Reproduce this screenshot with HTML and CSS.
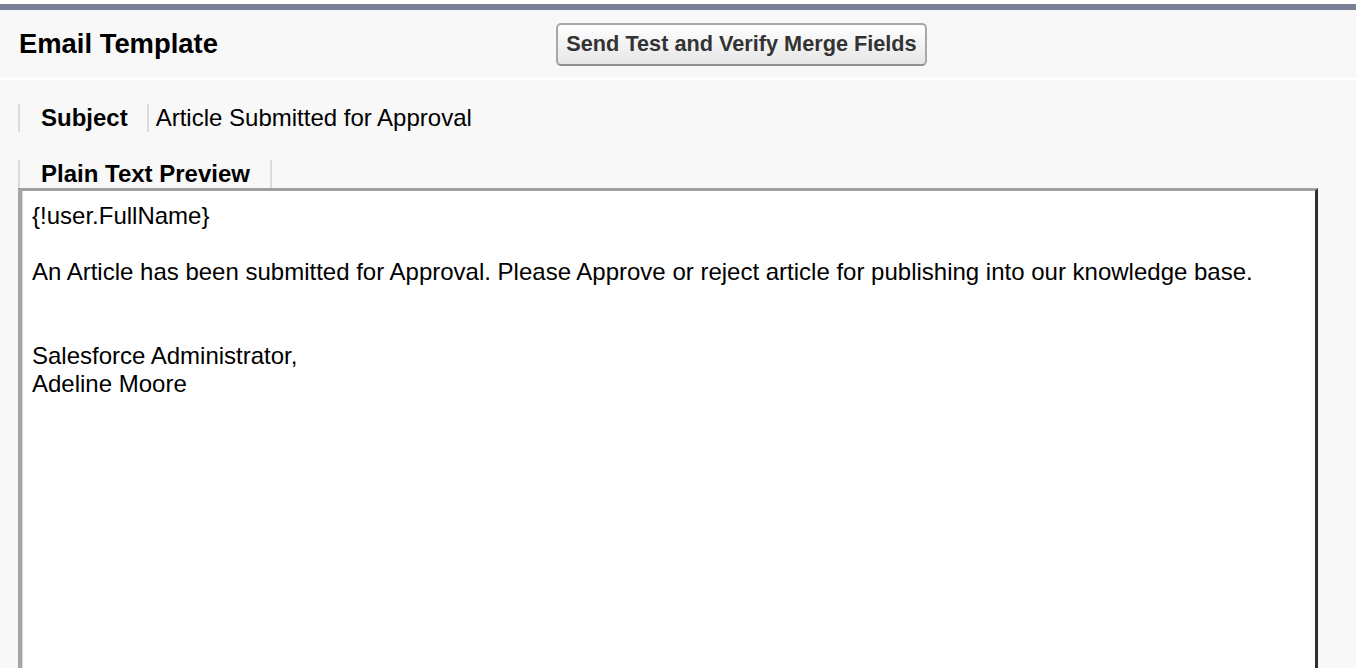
FILE: index.html
```html
<!DOCTYPE html>
<html lang="en">
<head>
<meta charset="utf-8">
<title>Email Template</title>
<link rel="stylesheet" href="styles.css">
</head>
<body>
<div class="page">
  <div class="accent"></div>
  <header class="header">
    <h1 class="title">Email Template</h1>
    <button class="btn" type="button">Send Test and Verify Merge Fields</button>
  </header>
  <main class="content">
    <div class="subject-row">
      <span class="subject-label">Subject</span>
      <span class="subject-value">Article Submitted for Approval</span>
    </div>
    <div class="tab-row">
      <span class="tab-label">Plain Text Preview</span>
    </div>
    <div class="preview">{!user.FullName}

An Article has been submitted for Approval. Please Approve or reject article for publishing into our knowledge base.


Salesforce Administrator,
Adeline Moore</div>
  </main>
</div>
</body>
</html>
```
FILE: styles.css
```css
html, body {
  margin: 0;
  padding: 0;
  background: #f8f8f8;
  font-family: "Liberation Sans", Arial, Helvetica, sans-serif;
  color: #000;
  overflow: hidden;
}

.page {
  border-top: 4px solid #ffffff;
}

.accent {
  height: 6px;
  background: #787f96;
}

.header {
  display: flex;
  align-items: center;
  height: 70px;
  padding-left: 19px;
  border-bottom: 2px solid #ffffff;
  box-sizing: border-box;
}

.title {
  margin: 0;
  font-size: 27.4px;
  font-weight: bold;
  line-height: 32px;
  width: 201px;
  white-space: nowrap;
}

.btn {
  margin-left: 336px;
  width: 371px;
  height: 43px;
  padding: 0;
  font-family: "Liberation Sans", Arial, Helvetica, sans-serif;
  font-size: 21.7px;
  font-weight: bold;
  color: #333333;
  background: linear-gradient(#ffffff, #f1f1f1 55%, #e6e6e6);
  border: 2px solid #a8a8a8;
  border-bottom-color: #8f8f8f;
  border-radius: 5px;
  white-space: nowrap;
}

.content {
  padding-top: 24px;
}

.subject-row {
  display: flex;
  align-items: center;
  height: 28px;
  margin-left: 18px;
  font-size: 24px;
  line-height: 28px;
  border-left: 2px solid #dcdcdc;
}

.subject-label {
  font-weight: bold;
  padding: 0 19px 0 21px;
  border-right: 2px solid #dcdcdc;
}

.subject-value {
  padding-left: 7px;
}

.tab-row {
  display: flex;
  margin-top: 28px;
  margin-left: 18px;
  height: 28px;
}

.tab-label {
  font-size: 24px;
  font-weight: bold;
  line-height: 28px;
  padding: 0 20px 0 21px;
  border-left: 2px solid #dcdcdc;
  border-right: 2px solid #dcdcdc;
}

.preview {
  margin-left: 18px;
  width: 1300px;
  height: 520px;
  box-sizing: border-box;
  background: #ffffff;
  border-top: 3px solid #a0a0a0;
  border-left: 4px solid #a6a6a6;
  border-right: 3px solid #2f2f2f;
  box-shadow: inset 1px 0 0 #d8d8d8;
  padding: 11px 10px 0 10px;
  font-size: 24px;
  line-height: 28px;
  white-space: pre-wrap;
}
```
